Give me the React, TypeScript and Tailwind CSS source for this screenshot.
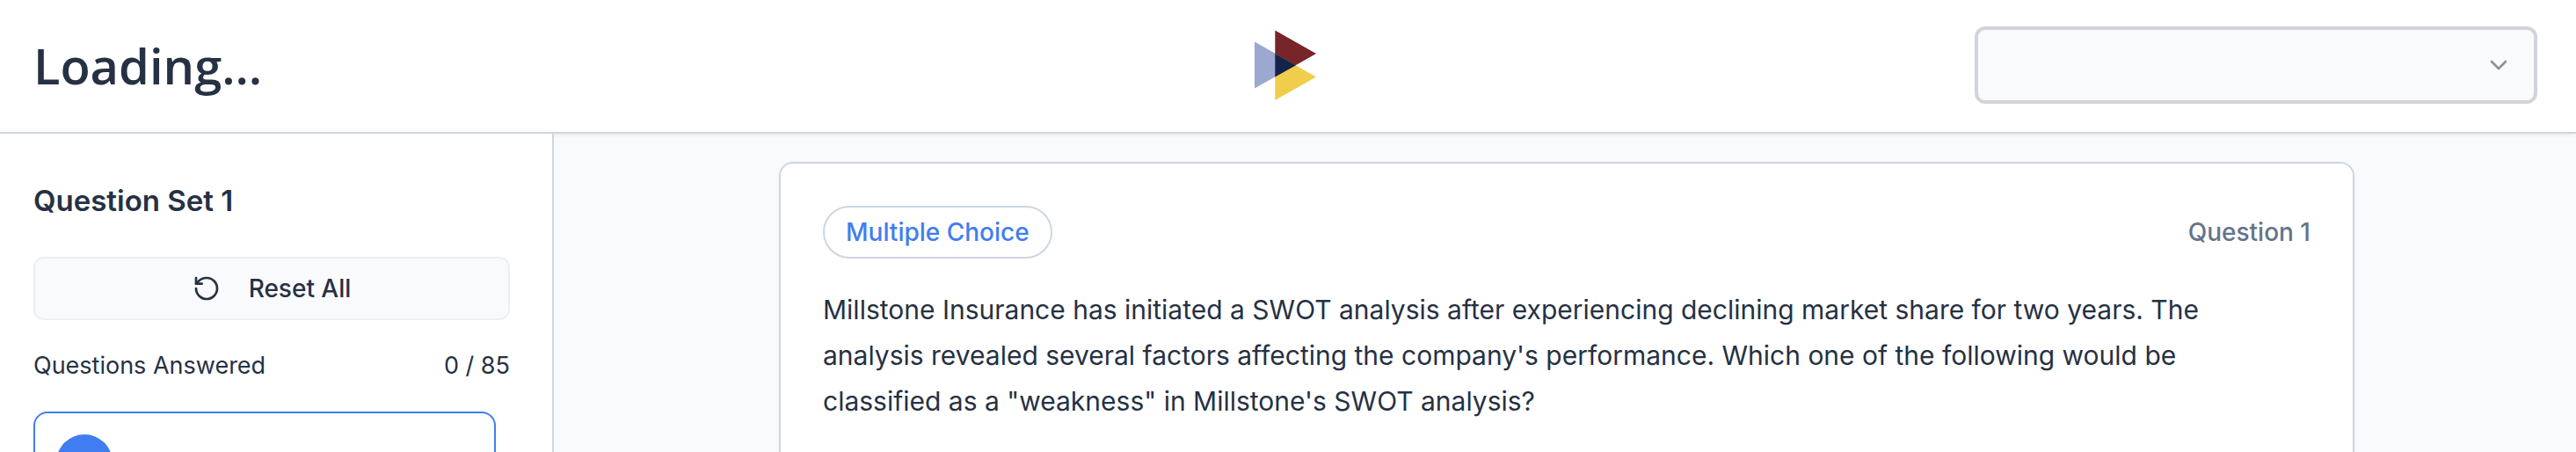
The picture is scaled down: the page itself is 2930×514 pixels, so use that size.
import { ChevronDown, RotateCcw } from "lucide-react";

function Logo() {
  return (
    <svg viewBox="0 0 70 80" className="h-20 w-[70px]" role="img" aria-label="Logo">
      <polygon points="0,13.5 47,40 0,66.5" fill="#9ba8d2" />
      <polygon points="23.3,0.5 70,27 23.3,53.5" fill="#772529" />
      <polygon points="23.3,27 70,53.5 23.3,80" fill="#f0cd4b" />
      <polygon points="23.3,27 47,40.2 23.3,53.5" fill="#14234b" />
    </svg>
  );
}

function Header() {
  return (
    <header className="relative z-10 grid grid-cols-[1fr_auto_1fr] items-center border-b-2 border-[#cdd6e2] bg-white pb-8 pl-[38px] pr-11 pt-[30px] shadow-[0_2px_4px_rgba(0,0,0,0.06)]">
      <h1 className="font-['Open_Sans',sans-serif] text-[56px] font-semibold leading-[64px]">Loading...</h1>
      <Logo />
      <div className="relative w-[640px] justify-self-end">
        <select
          aria-label="Question set"
          className="block h-[88px] w-full appearance-none rounded-xl border-4 border-[#d2d4dc] bg-[#f9fafc] px-6 text-[28px]"
        >
          <option value=""></option>
        </select>
        <ChevronDown
          className="pointer-events-none absolute right-7 top-7 size-8 text-[#8b929d]"
          strokeWidth={2}
          aria-hidden="true"
        />
      </div>
    </header>
  );
}

function Sidebar() {
  return (
    <aside className="relative z-20 flex w-[630px] shrink-0 flex-col overflow-hidden border-r-2 border-[#cdd6e2] bg-white pl-[38px] pr-12 pt-[52px]">
      <h2 className="text-[33px] font-semibold leading-[48px]">Question Set 1</h2>
      <button
        type="button"
        className="mt-10 flex h-[72px] shrink-0 items-center justify-center gap-8 rounded-xl border-2 border-[#eceff3] bg-[#f9fafc] text-[28px] font-medium leading-10"
      >
        <RotateCcw className="size-8" strokeWidth={2} aria-hidden="true" />
        Reset All
      </button>
      <div className="mt-8 flex justify-between text-[27px] leading-10">
        <span>Questions Answered</span>
        <span>0 / 85</span>
      </div>
      <button
        type="button"
        aria-label="Question 1"
        className="mr-4 mt-8 flex h-[116px] shrink-0 items-center rounded-2xl border-2 border-[#407df0] bg-white px-6"
      >
        <span className="size-16 rounded-full bg-[#407df0]" />
      </button>
    </aside>
  );
}

function QuestionCard() {
  return (
    <article className="w-full max-w-[1792px] rounded-2xl border-2 border-[#cdd6e2] bg-white px-12 pb-40 pt-12 shadow-[0_2px_4px_rgba(0,0,0,0.05)]">
      <div className="flex items-center justify-between text-[28px] font-medium leading-10">
        <span className="rounded-full border-2 border-[#cdd6e2] px-6 py-2 text-[#407df0]">Multiple Choice</span>
        <span className="text-[#64748b]">Question 1</span>
      </div>
      <p className="mt-8 pr-8 text-[30px] leading-[52px]">
        Millstone Insurance has initiated a SWOT analysis after experiencing declining market share for two years. The
        analysis revealed several factors affecting the company's performance. Which one of the following would be
        classified as a "weakness" in Millstone's SWOT analysis?
      </p>
    </article>
  );
}

export default function App() {
  return (
    <div className="flex h-screen flex-col overflow-hidden bg-[#f9fafc] font-[Inter,sans-serif] text-[#263143]">
      <Header />
      <div className="flex min-h-0 flex-1">
        <Sidebar />
        <main className="flex min-w-0 flex-1 items-start justify-center overflow-hidden pl-1 pt-8">
          <QuestionCard />
        </main>
      </div>
    </div>
  );
}
